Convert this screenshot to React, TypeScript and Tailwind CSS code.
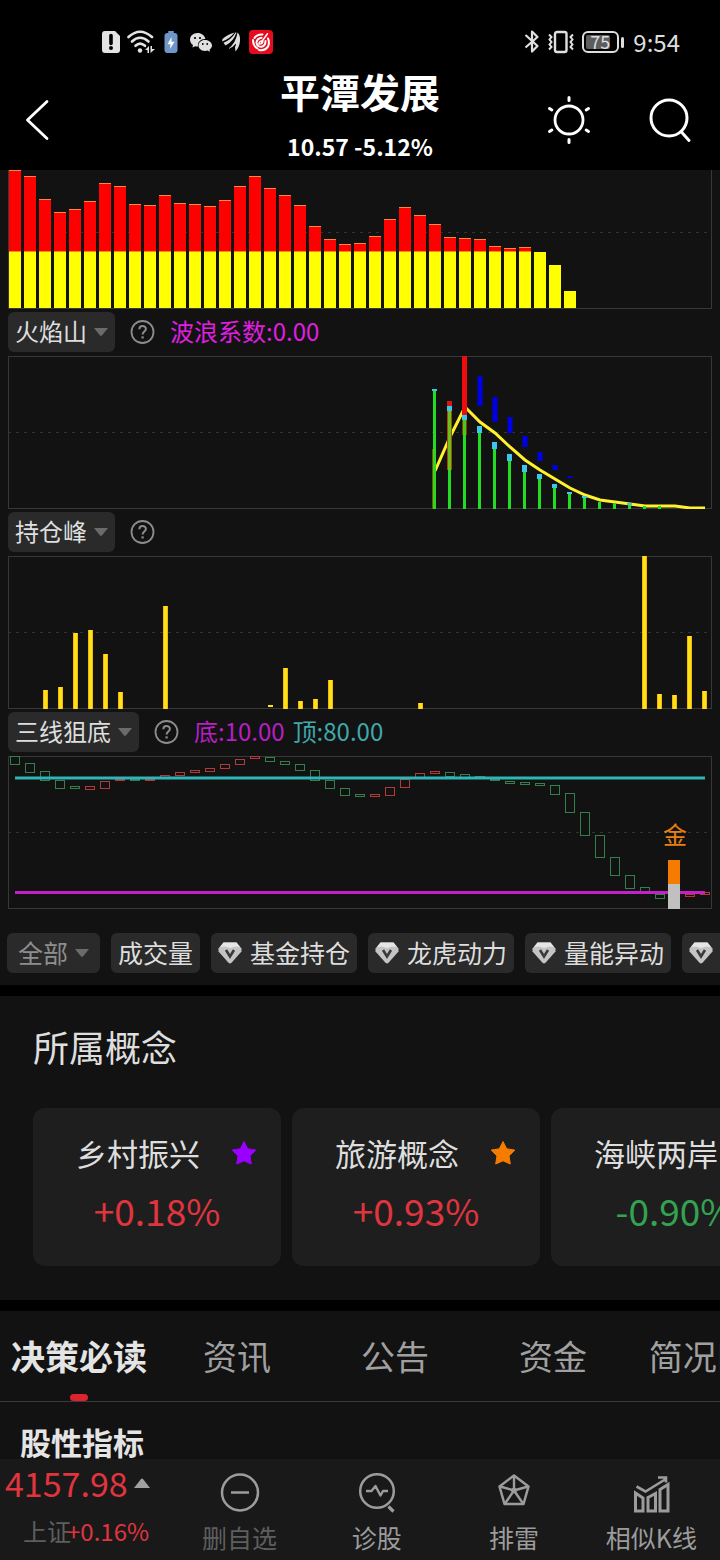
import type { ReactNode } from 'react';

const BAR_TOPS = [
  0, 6, 29, 42, 39, 31, 13, 16, 34, 35, 25, 33, 34, 36, 30, 16, 6, 18, 25, 35, 56, 69, 74, 73, 66, 49, 37, 45, 54, 67,
  68, 69, 76, 78, 77, 82, 95, 121,
];

// [cyan top, cyan bottom], one per column
const FLAME_CAPS = [
  [33, 35], [50, 55], [59, 64], [70, 77], [86, 93], [98, 105], [109, 116], [118, 123], [128, 132], [136, 138],
  [140, 142], [146, 146], [147, 147], [147, 149], [150, 150], [150, 150],
];

// [column, top, bottom]
const FLAME_BLUE = [
  [3, 20, 50], [4, 41, 66], [5, 61, 77], [6, 80, 91], [7, 96, 105], [8, 109, 114], [9, 120, 122],
];

const FLAME_LINE = [115, 81, 51, 66, 77, 91, 104, 114, 123, 132, 139, 144, 146, 148, 150, 150, 150, 152, 152];

// [x, top]
const PEAKS = [
  [35, 134], [50, 131], [65, 77], [80, 74], [95, 98], [110, 136], [155, 50], [275, 112], [290, 145], [305, 143],
  [320, 124], [410, 147], [634, 0], [649, 138], [664, 139], [679, 80], [694, 135],
];

const CANDLES: [number, number, 'r' | 'g'][] = [
  [0, 8, 'g'], [7, 16, 'g'], [15, 24, 'g'], [24, 32, 'g'], [30, 32, 'g'], [30, 33, 'r'], [25, 32, 'r'], [23, 24, 'r'],
  [23, 24, 'g'], [23, 24, 'r'], [19, 21, 'r'], [16, 19, 'r'], [14, 16, 'r'], [12, 15, 'r'], [8, 12, 'r'], [3, 8, 'r'],
  [0, 2, 'r'], [1, 5, 'g'], [5, 8, 'g'], [8, 14, 'g'], [14, 24, 'g'], [24, 32, 'g'], [32, 39, 'g'], [38, 40, 'g'],
  [38, 40, 'r'], [31, 39, 'r'], [23, 31, 'r'], [17, 21, 'r'], [15, 17, 'r'], [16, 20, 'g'], [18, 21, 'g'],
  [20, 21, 'g'], [23, 24, 'g'], [25, 27, 'g'], [26, 28, 'g'], [27, 29, 'g'], [29, 38, 'g'], [37, 56, 'g'],
  [56, 79, 'g'], [79, 101, 'g'], [101, 119, 'g'], [119, 132, 'g'], [131, 136, 'g'], [138, 142, 'g'], [137, 139, 'r'],
  [138, 140, 'r'], [136, 138, 'r'],
];

const CONCEPTS = [
  { name: '乡村振兴', change: '+0.18%', up: true, star: '#9a00ff' },
  { name: '旅游概念', change: '+0.93%', up: true, star: '#f57c00' },
  { name: '海峡两岸', change: '-0.90%', up: false, star: '#f57c00' },
];

const TABS = ['决策必读', '资讯', '公告', '资金', '简况F10'];

const Frame = ({ height, label, children }: { height: number; label: string; children: ReactNode }) => (
  <svg viewBox={`0 0 704 ${height}`} className="block w-full" role="img" aria-label={label}>
    {children}
  </svg>
);

const Border = () => (
  <>
    <rect x="0.5" y="0.5" width="703" height="152" fill="none" stroke="#383838" />
    <path d="M0 76.5H704" stroke="#333" strokeDasharray="3 5" />
  </>
);

const VolumeChart = () => (
  <Frame height={139} label="成交柱">
    <path d="M0.5 0V138.5H703.5V0" fill="none" stroke="#383838" />
    <path d="M0 62.5H704" stroke="#333" strokeDasharray="3 5" />
    {BAR_TOPS.map((top, i) => (
      <g key={i}>
        {top < 82 && (
          <>
            <rect x={1 + i * 15} y={top} width="12" height={82 - top} fill="#ff0000" />
            <path d={`M${1 + i * 15} ${top + 0.5}h12`} stroke="#f58a3c" />
          </>
        )}
        <rect x={1 + i * 15} y={Math.max(top, 82)} width="12" height={138 - Math.max(top, 82)} fill="#ffff00" />
        {top < 82 && <path d={`M${1 + i * 15} 81.5h12`} stroke="#ff8c00" />}
      </g>
    ))}
  </Frame>
);

const FlameChart = () => (
  <Frame height={153} label="火焰山">
    <Border />
    <polyline
      points={FLAME_LINE.map((y, i) => `${427 + i * 15},${y}`).join(' ')}
      fill="none"
      stroke="#fff12e"
      strokeWidth="3"
    />
    <rect x="424" y="93" width="4" height="60" fill="#8a4b00" />
    {FLAME_CAPS.map(([top, bottom], i) => (
      <g key={i}>
        <rect x={425 + i * 15} y={bottom} width="3" height={153 - bottom} fill="#22dd22" />
        <rect x={424 + i * 15} y={top} width="5" height={bottom - top} fill="#3fc4ea" />
      </g>
    ))}
    <rect x="439" y="45" width="5" height="5" fill="#d81414" />
    <rect x="439" y="55" width="5" height="59" fill="#a34a08" />
    <rect x="440" y="55" width="3" height="59" fill="#66c41c" />
    <rect x="454" y="0" width="5" height="59" fill="#ee0c0c" />
    <rect x="454" y="64" width="5" height="15" fill="#8a3a08" />
    <rect x="455" y="64" width="3" height="15" fill="#44cc1c" />
    {FLAME_BLUE.map(([col, top, bottom]) => (
      <rect key={col} x={424 + col * 15 + 0.5} y={top} width="5" height={bottom - top} fill="#0000e6" />
    ))}
  </Frame>
);

const PeakChart = () => (
  <Frame height={153} label="持仓峰">
    <Border />
    {PEAKS.map(([x, top]) => (
      <g key={x}>
        <rect x={x} y={top} width="5" height={153 - top} fill="#f5b800" />
        <rect x={x + 1} y={top} width="3" height={153 - top} fill="#ffe01c" />
      </g>
    ))}
    <rect x="260" y="149" width="5" height="2" fill="#ffe01c" />
  </Frame>
);

const BottomChart = () => (
  <Frame height={153} label="三线狙底">
    <Border />
    {CANDLES.map(([top, bottom, tone], i) => (
      <rect
        key={i}
        x={2.5 + i * 15}
        y={top + 0.5}
        width="9"
        height={bottom - top}
        fill="#121212"
        stroke={tone === 'r' ? '#b5383a' : '#34804a'}
      />
    ))}
    <path d="M7 22H697" stroke="#2fb4b8" strokeWidth="3" />
    <path d="M7 136.5H697" stroke="#c41fc8" strokeWidth="3" />
    <rect x="660" y="104" width="12" height="24" fill="#f57c00" />
    <rect x="660" y="128" width="12" height="25" fill="#c0c0c0" />
    <text x="667" y="88" fontSize="24" textAnchor="middle" fill="#e8810f">金</text>
  </Frame>
);

const Picker = ({ name }: { name: string }) => (
  <div className="relative h-10 shrink-0">
    <select
      aria-label="指标"
      className="h-10 appearance-none rounded-md bg-[#2a2a2a] pb-0.5 pl-[7px] pr-7 text-2xl leading-[38px] text-[#dedede]"
    >
      <option>{name}</option>
    </select>
    <svg viewBox="0 0 14 8" className="pointer-events-none absolute right-[7px] top-4 h-2 w-3.5">
      <path d="M0 0H14L8 7.400Q7 8.200 6 7.400Z" fill="#6b6b6b" />
    </svg>
  </div>
);

const IndicatorRow = ({ name, children }: { name: string; children?: ReactNode }) => (
  <div className="flex items-center gap-[15px] pb-1 pt-[3px]">
    <Picker name={name} />
    <button aria-label={`${name}说明`}>
      <svg viewBox="0 0 25 25" className="block size-[25px]" fill="none" stroke="#8c8c8c" strokeWidth="1.800">
        <circle cx="12.500" cy="12" r="11" />
        <path d="M9.300 9.300C9.300 4.900 15.900 5 15.900 9.100C15.900 11.500 12.600 11.700 12.600 14.500" strokeWidth="2" />
        <path d="M12.600 16.300V18.500" strokeWidth="2.200" />
      </svg>
    </button>
    {children}
  </div>
);

const Gem = () => (
  <svg viewBox="0 0 24 22" className="h-[22px] w-6">
    <path d="M5.500 0.500H18.500L23.500 6.500V9.500L13.500 20.800Q12 22.300 10.500 20.800L0.500 9.500V6.500Z" fill="#c4c4c4" />
    <path d="M5.500 0.500H18.500L22 5L17 4.500L12 6L7 4.500L2 5Z" fill="#e6e6e6" />
    <path d="M8 8L12 14.500L16 8" fill="none" stroke="#3a3a3a" strokeWidth="2.600" />
  </svg>
);

const Chip = ({ children, label }: { children: ReactNode; label?: string }) => (
  <button
    aria-label={label}
    className="flex h-10 shrink-0 items-center gap-2 rounded-md bg-[#2a2a2a] px-[7px] text-[25px] text-[#dedede]"
  >
    {children}
  </button>
);

const StatusBar = () => (
  <div className="flex h-7 items-center justify-between pl-[101px] pr-10">
    <div className="flex items-center">
      <svg viewBox="0 0 20 24" className="h-6 w-5">
        <path d="M4 1H14L19 6V20Q19 23 16 23H4Q1 23 1 20V4Q1 1 4 1Z" fill="#e4e4e4" />
        <path d="M10 5.500V13.500" stroke="#000" strokeWidth="3.600" strokeLinecap="round" />
        <circle cx="10" cy="18" r="2" fill="#000" />
      </svg>
      <svg viewBox="0 0 28 24" className="ml-1.5 h-6 w-7" fill="none" stroke="#e4e4e4" strokeWidth="2.600">
        <path d="M1.500 7Q13 -3.500 25 7" strokeLinecap="round" />
        <path d="M5 11.500Q13 4 21.500 11.500M8.500 15.800Q13 11.500 18 15.800" strokeLinecap="round" />
        <circle cx="13" cy="20.500" r="2.200" fill="#e4e4e4" stroke="none" />
        <path d="M18 20L22 16V23H20.500V20ZM23.500 16V23L28 19H25V16Z" fill="#e4e4e4" stroke="none" />
      </svg>
      <svg viewBox="0 0 14 24" className="ml-[9px] h-6 w-3.5">
        <rect x="4" y="1" width="6" height="2" rx="1" fill="#6f96c8" />
        <rect x="0.500" y="3" width="13" height="20" rx="3" fill="#6f96c8" />
        <path d="M7.500 7L3.500 14.200H6.500L6 19L10.500 11.800H7.500Z" fill="#fff" />
      </svg>
      <svg viewBox="0 0 24 24" className="ml-[11px] size-6">
        <path d="M8.500 3C4 3 1 6 1 9.800C1 12 2.200 13.800 4 15L3.400 17.500L6.200 16.200C7.200 16.500 8.200 16.600 9 16.500C8.200 12 12 8.700 16.400 9C15.700 5.500 12.500 3 8.500 3Z" fill="#e0e0e0" />
        <path d="M16 10C12 10 9.500 12.600 9.500 15.600C9.500 18.700 12.200 21 16 21C17 21 17.800 20.800 18.500 20.600L21 21.800L20.500 19.700C22 18.700 23 17.300 23 15.600C23 12.500 20 10 16 10Z" fill="#e0e0e0" />
        <g fill="#000">
          <circle cx="6" cy="8" r="1.100" />
          <circle cx="11" cy="8" r="1.100" />
          <circle cx="13.800" cy="14" r="0.900" />
          <circle cx="18.200" cy="14" r="0.900" />
        </g>
      </svg>
      <svg viewBox="0 0 20 22" className="ml-2 h-[22px] w-5" fill="#dedede">
        <path d="M1 10.500Q8.500 8 13.500 1.500Q6 3.500 1.500 8Z" />
        <path d="M4.500 14.500Q12.500 10.500 15.500 1.500L14.500 1.500Q10.500 8.500 2.500 11.800Z" />
        <path d="M7 18Q15 12 16.500 1.500Q19.500 4 19 10Q18.500 16 14.500 20.500L14 16Q15 14.500 15 12.500Q12 16.500 7 18Z" />
      </svg>
      <svg viewBox="0 0 24 24" className="ml-2 size-6">
        <rect width="24" height="24" rx="4" fill="#e60c1e" />
        <g fill="none" stroke="#fff" strokeWidth="2" strokeLinecap="round">
          <path d="M13.500 4.500Q8 4 5.500 8M4 10Q4 16 8.500 18.500M10 20Q17 21 19.500 15.500Q20.500 11.500 19 8.500" />
          <path d="M12.500 7.800Q8 8.500 7.500 12.500Q8 17 12.500 16.800Q16.500 16 16.500 11" />
          <path d="M10 14Q10 10.500 13.800 11.200Q13.800 14 10 14ZM12.500 12L18.500 3.800" strokeWidth="1.500" />
        </g>
      </svg>
    </div>
    <div className="flex items-center text-2xl leading-7 text-[#dedede]">
      <svg viewBox="0 0 16 26" className="h-[26px] w-4" fill="none" stroke="#e0e0e0" strokeWidth="2.200" strokeLinejoin="round">
        <path d="M1.500 6L13.500 17L8 22.500V2.500L13.500 8L1.500 18.500" />
      </svg>
      <svg viewBox="0 0 28 24" className="ml-[7px] h-6 w-7" fill="none" stroke="#e0e0e0" strokeWidth="2">
        <rect x="8" y="2" width="11.500" height="20" rx="2" strokeWidth="2.400" />
        <path d="M2 4.500L4.500 7L2.500 9.500L4.500 12L2.500 14.500L4.500 17L2 19.500M26 4.500L23.500 7L25.500 9.500L23.500 12L25.500 14.500L23.500 17L26 19.500" />
      </svg>
      <div className="ml-[7px] flex h-[22px] w-[37px] items-center rounded-md border-2 border-[#dedede] p-0.5">
        <span className="h-full w-6 rounded-xs bg-[#5c5c5c] pl-1 text-lg leading-[12px]">75</span>
      </div>
      <span className="ml-0.5 h-[11px] w-[3px] rounded-sm bg-[#dedede]" />
      <time className="ml-[9px]">9:54</time>
    </div>
  </div>
);

const Header = () => (
  <header className="bg-black pt-7 text-white">
    <StatusBar />
    <div className="grid grid-cols-[1fr_auto_1fr]">
      <div className="flex items-center pl-6 pt-3.5">
        <button aria-label="返回">
          <svg viewBox="0 0 26 42" className="block h-[42px] w-[26px]" fill="none" stroke="#fff" strokeWidth="2.800" strokeLinecap="round" strokeLinejoin="round">
            <path d="M23 2.500L3.500 21L23 39.500" />
          </svg>
        </button>
      </div>
      <div className="pb-2 pt-[9px] text-center font-bold">
        <h1 className="text-[40px] leading-[52px]">平潭发展</h1>
        <p className="mt-[13px] text-[23px] leading-8">10.57 -5.12%</p>
      </div>
      <div className="flex items-center justify-end gap-[54px] pr-[27px] pt-3.5">
        <button aria-label="切换主题">
          <svg viewBox="0 0 48 50" className="block h-[50px] w-12" fill="none" stroke="#fff" strokeWidth="3" strokeLinecap="round">
            <circle cx="24" cy="25" r="14" strokeWidth="2.800" />
            <path d="M24 2.500V5.500M24 44.500V47.500M4.500 13.500L6.800 15M43.500 13.500L41.200 15M4.500 36.500L6.800 35M43.500 36.500L41.200 35" />
          </svg>
        </button>
        <button aria-label="搜索">
          <svg viewBox="0 0 46 46" className="block size-[46px]" fill="none" stroke="#fff" strokeWidth="3" strokeLinecap="round">
            <circle cx="22" cy="21" r="18" />
            <path d="M34.500 35L42 43.500" />
          </svg>
        </button>
      </div>
    </div>
  </header>
);

const NavItem = ({ label, muted, children }: { label: string; muted?: boolean; children: ReactNode }) => (
  <button className="flex flex-1 flex-col items-center pt-3">
    <svg viewBox="0 0 44 44" className="size-11" fill="none" stroke="#9c9c9c" strokeWidth="2.500">
      {children}
    </svg>
    <span className={`text-[25px] leading-[44px] ${muted ? 'text-[#5e5e5e]' : 'text-[#9c9c9c]'}`}>{label}</span>
  </button>
);

const App = () => {
  return (
    <div className="min-h-screen overflow-x-clip bg-black font-['Noto_Sans_CJK_SC',sans-serif] whitespace-nowrap">
      <Header />

      {/* Indicator charts */}
      <section className="bg-[#121212] pb-3">
        <div className="px-2">
          <VolumeChart />
          <IndicatorRow name="火焰山">
            <span className="pb-0.5 text-2xl text-[#e01fe0]">波浪系数:0.00</span>
          </IndicatorRow>
          <FlameChart />
          <IndicatorRow name="持仓峰" />
          <PeakChart />
          <IndicatorRow name="三线狙底">
            <p className="flex gap-2 pb-0.5 text-2xl">
              <span className="text-[#b91fc4]">底:10.00</span>
              <span className="text-[#3fa9ab]">顶:80.00</span>
            </p>
          </IndicatorRow>
          <BottomChart />
        </div>
        <div className="mt-6 flex gap-[11px] overflow-hidden pl-[7px]">
          <div className="relative h-10 shrink-0">
            <select
              aria-label="分类"
              className="h-10 appearance-none rounded-md bg-[#2a2a2a] pb-0.5 pl-[11px] pr-[31px] text-[25px] leading-[38px] text-[#8e8e8e]"
            >
              <option>全部</option>
            </select>
            <svg viewBox="0 0 14 8" className="pointer-events-none absolute right-[11px] top-4 h-2 w-3.5">
              <path d="M0 0H14L8 7.400Q7 8.200 6 7.400Z" fill="#6b6b6b" />
            </svg>
          </div>
          <Chip>成交量</Chip>
          <Chip><Gem />基金持仓</Chip>
          <Chip><Gem />龙虎动力</Chip>
          <Chip><Gem />量能异动</Chip>
          <Chip label="更多指标">
            <Gem />
            <span className="w-[100px]" />
          </Chip>
        </div>
      </section>

      {/* Concepts */}
      <section className="mt-[11px] overflow-hidden bg-[#121212] pb-[34px] pl-[33px] pt-[25px]">
        <h2 className="text-4xl leading-[50px] text-[#dedede]">所属概念</h2>
        <div className="mt-[37px] flex gap-[11px]">
          {CONCEPTS.map((item) => (
            <a key={item.name} href="#" className="block h-[158px] w-[248px] shrink-0 rounded-xl bg-[#1e1e1e] pt-[22px]">
              <div className="flex items-center gap-8 pl-[43px]">
                <span className="text-[31px] leading-[46px] text-[#dedede]">{item.name}</span>
                <svg viewBox="0 0 24 24" className="size-6">
                  <path
                    d="M12 0.500L15.700 7.800L23.800 9.100L18 14.900L19.300 23L12 19.800L4.700 23L6 14.900L0.200 9.100L8.300 7.800Z"
                    fill={item.star}
                    stroke={item.star}
                    strokeLinejoin="round"
                  />
                </svg>
              </div>
              <p className={`mt-1.5 text-center text-[37px] leading-[56px] ${item.up ? 'text-[#e0353f]' : 'text-[#33a352]'}`}>
                {item.change}
              </p>
            </a>
          ))}
        </div>
      </section>

      {/* News tabs */}
      <section className="mt-[11px] bg-[#121212]">
        <nav className="flex overflow-hidden border-b border-[#3a3a3a]">
          {TABS.map((tab, i) => (
            <button
              key={tab}
              className={`flex w-[158px] shrink-0 flex-col items-center pt-5 text-[34px] leading-[50px] ${
                i === 0 ? 'font-bold text-[#e4e4e4]' : 'text-[#a0a0a0]'
              }`}
            >
              {tab}
              <span className={`mt-[13px] h-[7px] w-[18px] rounded-sm ${i === 0 ? 'bg-[#dc2430]' : ''}`} />
            </button>
          ))}
        </nav>
        <h2 className="pl-5 pt-[23px] text-[31px] font-bold leading-[34px] text-[#e4e4e4]">股性指标</h2>
      </section>

      {/* Bottom bar */}
      <footer className="sticky bottom-0 flex bg-[#191919] pb-px">
        <div className="w-[171px] pl-[5px]">
          <div className="flex items-center gap-1.5 text-[#e0353f]">
            <span className="text-[34px] leading-[48px]">4157.98</span>
            <svg viewBox="0 0 16 10" className="h-2.5 w-4">
              <path d="M0 10L7 1Q8 0 9 1L16 10Z" fill="#a0a0a0" />
            </svg>
          </div>
          <div className="flex pl-[18px] text-2xl leading-[48px]">
            <span className="text-[#5e5e5e]">上证</span>
            <span className="-ml-1 text-[#e0353f]">+0.16%</span>
          </div>
        </div>
        <NavItem label="删自选" muted>
          <circle cx="22" cy="21.500" r="18" />
          <path d="M13 21.500H31" />
        </NavItem>
        <NavItem label="诊股">
          <circle cx="22" cy="20" r="16.800" />
          <path d="M11 20H16.500L20.500 15L25.500 24.500L28 20H33" strokeWidth="2.400" strokeLinejoin="round" />
          <path d="M33.500 35.500L38.500 40.500" strokeWidth="3.200" />
        </NavItem>
        <NavItem label="排雷">
          <path d="M22 4.500L36.500 15.500L31.500 33H12.500L7.500 15.500Z" strokeLinejoin="round" />
          <path d="M22 19.500V5M22 19.500L36 15.500M22 19.500L31 32.500M22 19.500L13 32.500M22 19.500L8 15.500" strokeWidth="2.400" />
          <circle cx="22" cy="19.500" r="2.800" fill="#9c9c9c" stroke="none" />
        </NavItem>
        <NavItem label="相似K线">
          <path d="M6.500 22L14 27V40H6.500ZM19 26.500L26.500 22.500V40H19ZM31 18.500L39 13.500V40H31Z" strokeWidth="3" />
          <path d="M7.500 15.500L16.500 20.500L36 8.500M29 6.500H37V11.500" strokeWidth="2.600" />
        </NavItem>
      </footer>
    </div>
  );
};

export default App;
